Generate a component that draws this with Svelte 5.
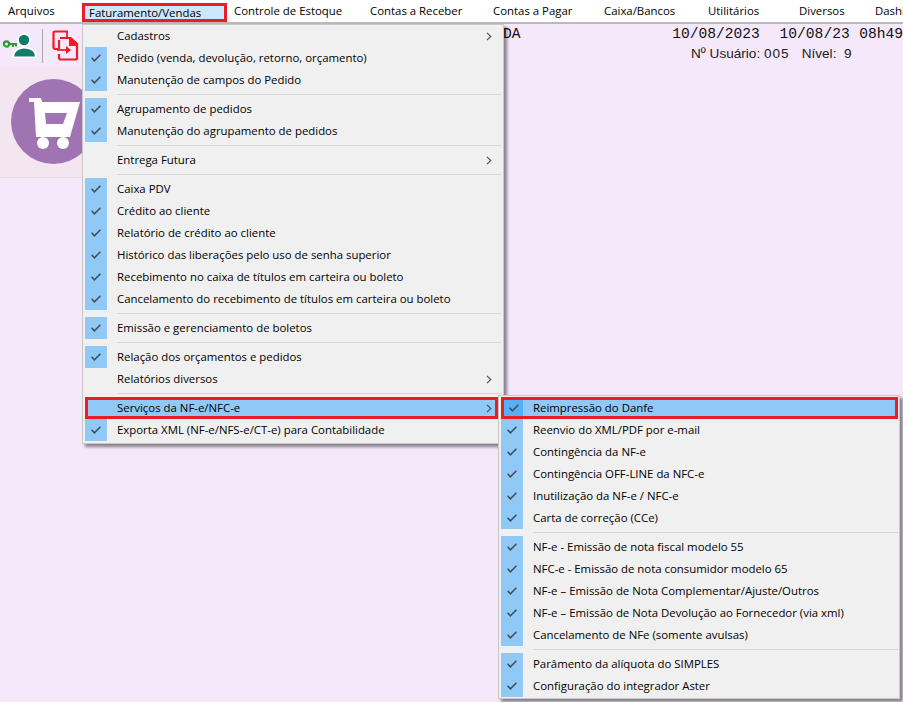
<script>
  const topMenu = [
    { label: 'Arquivos', width: 81 },
    { label: 'Faturamento/Vendas', width: 145, open: true },
    { label: 'Controle de Estoque', width: 136 },
    { label: 'Contas a Receber', width: 123 },
    { label: 'Contas a Pagar', width: 111 },
    { label: 'Caixa/Bancos', width: 104 },
    { label: 'Utilitários', width: 91 },
    { label: 'Diversos', width: 76 },
    { label: 'Dashboard', width: 80 }
  ]

  // '-' is a separator
  const mainItems = [
    { text: 'Cadastros', sub: true, bare: true },
    { text: 'Pedido (venda, devolução, retorno, orçamento)' },
    { text: 'Manutenção de campos do Pedido' },
    '-',
    { text: 'Agrupamento de pedidos' },
    { text: 'Manutenção do agrupamento de pedidos' },
    '-',
    { text: 'Entrega Futura', sub: true, bare: true },
    '-',
    { text: 'Caixa PDV' },
    { text: 'Crédito ao cliente' },
    { text: 'Relatório de crédito ao cliente' },
    { text: 'Histórico das liberações pelo uso de senha superior' },
    { text: 'Recebimento no caixa de títulos em carteira ou boleto' },
    { text: 'Cancelamento do recebimento de títulos em carteira ou boleto' },
    '-',
    { text: 'Emissão e gerenciamento de boletos' },
    '-',
    { text: 'Relação dos orçamentos e pedidos' },
    { text: 'Relatórios diversos', sub: true, bare: true },
    '-',
    { text: 'Serviços da NF-e/NFC-e', sub: true, bare: true, active: true },
    { text: 'Exporta XML (NF-e/NFS-e/CT-e) para Contabilidade' }
  ]

  const subItems = [
    { text: 'Reimpressão do Danfe', active: true },
    { text: 'Reenvio do XML/PDF por e-mail' },
    { text: 'Contingência da NF-e' },
    { text: 'Contingência OFF-LINE da NFC-e' },
    { text: 'Inutilização da NF-e / NFC-e' },
    { text: 'Carta de correção (CCe)' },
    '-',
    { text: 'NF-e - Emissão de nota fiscal modelo 55' },
    { text: 'NFC-e - Emissão de nota consumidor modelo 65' },
    { text: 'NF-e – Emissão de Nota Complementar/Ajuste/Outros' },
    { text: 'NF-e – Emissão de Nota Devolução ao Fornecedor (via xml)' },
    { text: 'Cancelamento de NFe (somente avulsas)' },
    '-',
    { text: 'Parâmento da alíquota do SIMPLES' },
    { text: 'Configuração do integrador Aster' }
  ]
</script>

{#snippet menuList(items)}
  {#each items as item}
    {#if item === '-'}
      <div class="sep"><span></span></div>
    {:else}
      <div class="item" class:active={item.active}>
        <span class="check" class:bare={item.bare}>
          {#if !item.bare}
            <svg width="10" height="8" viewBox="0 0 10 8">
              <path d="M0.6 3.8 L3.4 6.8 L9.4 0.8" fill="none" stroke="#474b52" stroke-width="1.5" />
            </svg>
          {/if}
        </span>
        <span class="label">{item.text}</span>
        {#if item.sub}
          <svg class="arrow" width="6" height="9" viewBox="0 0 6 9">
            <path d="M1 0.8 L4.8 4.5 L1 8.2" fill="none" stroke="#4d4d4d" stroke-width="1.1" />
          </svg>
        {/if}
      </div>
    {/if}
  {/each}
{/snippet}

<div class="window">
  <nav class="menubar">
    {#each topMenu as m}
      <span class="top" class:open={m.open} style="width: {m.width}px">{m.label}</span>
    {/each}
  </nav>

  <div class="content">
    <div class="toolbar">
      <div class="tools">
        <svg class="user" width="36" height="28" viewBox="0 0 36 28">
          <circle cx="22" cy="8" r="7" fill="#fff" />
          <path d="M10 26 Q11 15 22 15 Q35 15 35 26 Z" fill="#fff" />
          <circle cx="22" cy="8" r="5.2" fill="#127c68" />
          <path d="M12 24.5 Q13 17 22 16.5 Q33 17 33 24.5 Z" fill="#127c68" />
          <circle cx="4.5" cy="12" r="2.6" fill="none" stroke="#2f9e30" stroke-width="2.2" />
          <path d="M7 12 H15 M11 12 V15 M14 12 V14.5" fill="none" stroke="#2f9e30" stroke-width="2" />
        </svg>
        <span class="divider"></span>
        <svg class="doc" width="28" height="31" viewBox="0 0 28 31">
          <path d="M16 1.5 H3 Q1.5 1.5 1.5 3 V17 Q1.5 19 3.5 19 H6" fill="none" stroke="#ee1c25" stroke-width="2.2" />
          <path d="M15 1 V7" fill="none" stroke="#ee1c25" stroke-width="1.8" />
          <path d="M8 8 H18 L25 14 V28 Q25 29.5 23 29.5 H9 Q7 29.5 7 27.5 V24" fill="none" stroke="#ee1c25" stroke-width="2.2" />
          <path d="M17 7 H19 L26 13.5 V16 H17 Z" fill="#ee1c25" />
          <path d="M7 19 V10" fill="none" stroke="#ee1c25" stroke-width="2.2" />
          <path d="M5 20 H15" fill="none" stroke="#ee1c25" stroke-width="1.8" />
          <path d="M14 16 L19 20 L14 24 Z" fill="#ee1c25" />
        </svg>
      </div>
      <div class="status">
        <div class="dates">
          <span class="company">DA</span>
          <span class="date first">10/08/2023</span>
          <span class="date second">10/08/23</span>
          <span class="date">08h49</span>
        </div>
        <div class="user-line">
          <span>Nº Usuário: <span class="num">005</span></span>
          <span>Nível:&nbsp; 9</span>
        </div>
      </div>
    </div>

    <div class="banner">
      <svg class="cart-circle" width="85" height="85" viewBox="0 0 85 85">
        <circle cx="42.5" cy="42.5" r="42.5" fill="#a074b2" />
        <path d="M18 19 H30 L31 23 H69 L59 58 H25 L23 23 H18 Z M34 34 H56 L52 45 H35 Z" fill="#fff" fill-rule="evenodd" />
        <circle cx="32" cy="64" r="6" fill="#fff" />
        <circle cx="52" cy="64" r="6" fill="#fff" />
      </svg>
    </div>
  </div>

  <div class="menu main-menu">
    {@render menuList(mainItems)}
  </div>
  <div class="menu sub-menu">
    {@render menuList(subItems)}
  </div>
</div>

<style>
  :global(body) {
    margin: 0;
    overflow: hidden;
  }

  .window {
    position: relative;
    width: 903px;
    height: 702px;
    overflow: hidden;
    background: #f6e8fb;
    font-family: "Open Sans", "Noto Sans", sans-serif;
    font-size: 11.4px;
    color: #000;
  }

  .menubar {
    display: flex;
    height: 22px;
    padding-left: 1px;
    background: #fff;
    border-bottom: 2px solid #b9b9b9;
    overflow: hidden;
    white-space: nowrap;
    box-sizing: content-box;
  }

  .top {
    flex: none;
    box-sizing: border-box;
    height: 19px;
    margin-top: 3px;
    padding-left: 7px;
    line-height: 15px;
  }

  .top.open {
    padding-left: 4px;
    background: #cce8ff;
    border: 3px solid #ed1c24;
    line-height: 14px;
  }

  .toolbar {
    display: flex;
    justify-content: space-between;
    height: 43px;
  }

  .tools {
    display: flex;
    align-items: center;
    padding-left: 2px;
  }

  .divider {
    width: 1px;
    height: 34px;
    margin: 0 9px 0 4px;
    background: #a8a8a8;
  }

  .status {
    width: 400px;
    margin-left: auto;
  }

  .dates {
    display: flex;
    height: 20px;
    padding-top: 2px;
    font-family: "Liberation Mono", "DejaVu Sans Mono", monospace;
    font-size: 14.6px;
    line-height: 16px;
    white-space: nowrap;
    color: #111;
  }

  .company {
    width: 170px;
  }

  .date.first {
    width: 108px;
  }

  .date.second {
    width: 80px;
  }

  .user-line {
    display: flex;
    gap: 12px;
    margin-left: 188px;
    margin-top: -1px;
    font-family: "Liberation Sans", Arial, sans-serif;
    font-size: 13.6px;
    line-height: 18px;
    color: #222;
    white-space: nowrap;
  }

  .num {
    letter-spacing: 1px;
  }

  .banner {
    position: relative;
    width: 82px;
    height: 110px;
    background: #f3e6f1;
    border-bottom: 1px solid #eadfe6;
    overflow: hidden;
  }

  .cart-circle {
    position: absolute;
    left: 11px;
    top: 12px;
  }

  .menu {
    position: absolute;
    box-sizing: border-box;
    padding: 0 2px 2px;
    background: #f0f0f0;
    border: 1px solid #c8c8c8;
    box-shadow: 3px 3px 3px rgba(0, 0, 0, 0.45);
    white-space: nowrap;
  }

  .main-menu {
    left: 82px;
    top: 24px;
    width: 422px;
    height: 420px;
  }

  .sub-menu {
    left: 498px;
    top: 395px;
    width: 402px;
    height: 304px;
    padding: 1px 1px 2px 2px;
  }

  .item {
    position: relative;
    display: flex;
    align-items: center;
    height: 22px;
  }

  .check {
    flex: none;
    display: flex;
    align-items: center;
    justify-content: center;
    width: 22px;
    height: 22px;
    margin-right: 10px;
    background: #90c8f6;
  }

  .check.bare {
    background: none;
  }

  .label {
    line-height: 22px;
  }

  .arrow {
    position: absolute;
    right: 9px;
    top: 7px;
  }

  .item.active {
    background: #90c8f6;
    outline: 3px solid #ed1c24;
    outline-offset: -3px;
    z-index: 1;
  }

  .main-menu .item.active {
    margin-right: 3px;
  }

  .main-menu .item.active .arrow {
    right: 6px;
  }

  .item.active .check:not(.bare) {
    background: #56b0f5;
    margin: 3px 10px 3px 3px;
    height: 16px;
    width: 19px;
  }

  .sep {
    height: 7px;
    padding-left: 32px;
    display: flex;
    align-items: center;
  }

  .sep span {
    flex: 1;
    height: 1px;
    background: #d4d4d4;
  }
</style>
